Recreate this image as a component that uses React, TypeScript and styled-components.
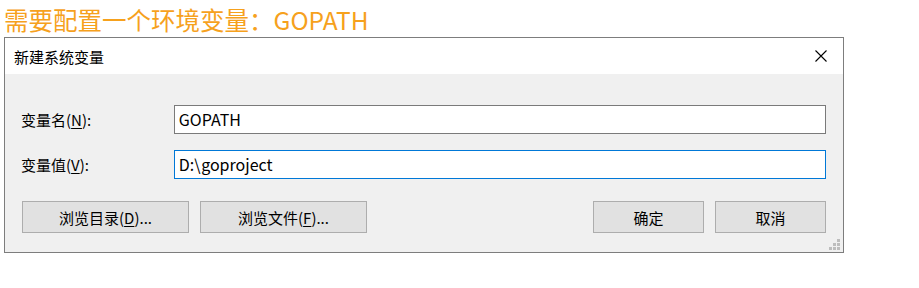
import React from 'react';
import styled, { createGlobalStyle } from 'styled-components';

const GlobalStyle = createGlobalStyle`
  body {
    margin: 0;
    background: #fff;
    font-family: "Noto Sans CJK SC", "Noto Sans", sans-serif;
  }
`;

const App = () => {
  return (
    <Page>
      <GlobalStyle />
      <Heading>需要配置一个环境变量：GOPATH</Heading>
      <Dialog>
        <TitleBar>
          <Title>新建系统变量</Title>
          <CloseButton>
            <svg width="12" height="12" viewBox="0 0 12 12">
              <path d="M0.5 0.5 L11.5 11.5 M11.5 0.5 L0.5 11.5" stroke="#000" strokeWidth="1.1" />
            </svg>
          </CloseButton>
        </TitleBar>
        <Body>
          <Field>
            <Label>
              变量名(<u>N</u>):
            </Label>
            <Input>GOPATH</Input>
          </Field>
          <Field>
            <Label>
              变量值(<u>V</u>):
            </Label>
            <Input $focused>D:\goproject</Input>
          </Field>
          <ButtonRow>
            <ButtonGroup>
              <Button $wide>
                浏览目录(<u>D</u>)...
              </Button>
              <Button $wide>
                浏览文件(<u>F</u>)...
              </Button>
            </ButtonGroup>
            <ButtonGroup>
              <Button>确定</Button>
              <Button>取消</Button>
            </ButtonGroup>
          </ButtonRow>
          <Grip>
            <svg width="11" height="11" viewBox="0 0 11 11">
              <rect x="8" y="0" width="3" height="3" fill="#bdbdbd" />
              <rect x="4" y="4" width="3" height="3" fill="#bdbdbd" />
              <rect x="8" y="4" width="3" height="3" fill="#bdbdbd" />
              <rect x="0" y="8" width="3" height="3" fill="#bdbdbd" />
              <rect x="4" y="8" width="3" height="3" fill="#bdbdbd" />
              <rect x="8" y="8" width="3" height="3" fill="#bdbdbd" />
            </svg>
          </Grip>
        </Body>
      </Dialog>
    </Page>
  );
};

export default App;

const Page = styled.div`
  width: 919px;
  height: 288px;
  padding-left: 4px;
  box-sizing: border-box;
`;
const Heading = styled.div`
  height: 37px;
  line-height: 40px;
  font-size: 24.5px;
  color: #f6a11d;
  white-space: nowrap;
`;
const Dialog = styled.div`
  width: 840px;
  height: 216px;
  box-sizing: border-box;
  border: 1px solid #7d7d7d;
  display: flex;
  flex-direction: column;
`;
const TitleBar = styled.div`
  height: 36px;
  background: #fff;
  display: flex;
  align-items: center;
  justify-content: space-between;
  padding: 0 16px 0 9px;
`;
const Title = styled.div`
  font-size: 15px;
  color: #000;
`;
const CloseButton = styled.div`
  display: flex;
  align-items: center;
`;
const Body = styled.div`
  position: relative;
  flex: 1;
  background: #f0f0f0;
  padding: 31px 17px 0 16px;
  display: flex;
  flex-direction: column;
`;
const Field = styled.div`
  display: flex;
  align-items: center;
  margin-bottom: 16px;
`;
const Label = styled.div`
  width: 153px;
  font-size: 15px;
  color: #000;
  u {
    text-underline-offset: 2px;
  }
`;
const Input = styled.div<{ $focused?: boolean }>`
  width: 653px;
  height: 29px;
  box-sizing: border-box;
  border: 1px solid ${(p) => (p.$focused ? '#0078d7' : '#7a7a7a')};
  background: #fff;
  font-size: 16px;
  line-height: 27px;
  padding-left: 4px;
  color: #000;
`;
const ButtonRow = styled.div`
  display: flex;
  justify-content: space-between;
  margin-top: 6px;
  padding-left: 1px;
`;
const ButtonGroup = styled.div`
  display: flex;
  gap: 11px;
`;
const Button = styled.div<{ $wide?: boolean }>`
  width: ${(p) => (p.$wide ? '167px' : '111px')};
  height: 32px;
  box-sizing: border-box;
  border: 1px solid #adadad;
  background: #e1e1e1;
  display: flex;
  align-items: center;
  justify-content: center;
  font-size: 15px;
  color: #000;
  u {
    text-underline-offset: 2px;
  }
`;
const Grip = styled.div`
  position: absolute;
  right: 3px;
  bottom: 2px;
  display: flex;
`;
